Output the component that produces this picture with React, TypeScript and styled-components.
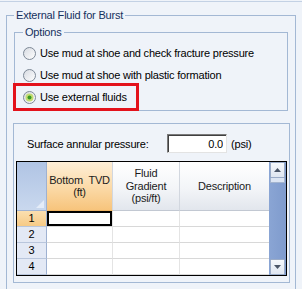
import React from "react";
import styled, { createGlobalStyle, css } from "styled-components";

const GlobalStyle = createGlobalStyle`
  body {
    margin: 0;
    background: #eff3f9;
    font-family: "Liberation Sans", Arial, sans-serif;
    font-size: 11px;
    letter-spacing: -0.2px;
    color: #000;
  }
`;

const Page = styled.div`
  width: 302px;
  height: 289px;
  overflow: hidden;
  padding-top: 1px;
  box-sizing: border-box;
`;

const TopRule = styled.div`
  height: 1px;
  background: #c3d1e4;
`;

const GroupBox = styled.fieldset`
  margin: 0;
  min-width: 0;
  border: 1px solid #a3b8d4;
`;

const OuterGroup = styled(GroupBox)`
  margin: 7px 6px 0;
  padding: 4px 7px 8px;
`;

const OptionsGroup = styled(GroupBox)`
  padding: 3px 0 2px 1px;
`;

const TableGroup = styled(GroupBox)`
  margin: 12px -2px 0 -1px;
  padding: 10px 2px 6px;
`;

const Legend = styled.legend<{ $indent: number }>`
  margin-left: ${(p) => p.$indent}px;
  padding: 0 2px;
  line-height: 13px;
  color: #15315e;
`;

const OptionRow = styled.label<{ $marked?: boolean }>`
  display: flex;
  align-items: center;
  gap: 4px;
  height: 22px;
  width: fit-content;
  padding: 0 9px 0 7px;
  white-space: nowrap;
  ${(p) =>
    p.$marked &&
    css`
      outline: 3px solid #e3121b;
    `}
`;

const PressureRow = styled.div`
  display: flex;
  align-items: center;
  height: 19px;
  padding-left: 11px;
`;

const PressureLabel = styled.span`
  width: 140px;
`;

const PressureInput = styled.input`
  box-sizing: border-box;
  width: 60px;
  height: 19px;
  margin: 0;
  padding: 0 3px;
  font: inherit;
  letter-spacing: inherit;
  text-align: right;
  background: #fff;
  border: 1px solid;
  border-color: #7a7a7a #e3e3e3 #e3e3e3 #7a7a7a;
  box-shadow: inset 1px 1px 0 #404040;
  outline: none;
`;

const Unit = styled.span`
  margin-left: 4px;
`;

const GridFrame = styled.div`
  display: flex;
  margin-top: 8px;
  border: 1px solid #000;
  background: #fff;
`;

const Sheet = styled.div`
  display: grid;
  grid-template-columns: 30px 66px 67px 89px;
  grid-template-rows: 49px repeat(4, 16px);
`;

const CornerCell = styled.div`
  box-sizing: border-box;
  display: flex;
  align-items: flex-end;
  justify-content: flex-end;
  padding: 0 2px 2px 0;
  background: linear-gradient(180deg, #b0c4e4 0%, #c9d8ee 100%);
  border-right: 1px solid #9eb1d1;
  border-bottom: 1px solid #9eb1d1;
`;

const ColHeader = styled.div<{ $active?: boolean; $last?: boolean }>`
  box-sizing: border-box;
  display: flex;
  align-items: center;
  justify-content: center;
  text-align: center;
  line-height: 12.5px;
  color: #1b1b1b;
  white-space: pre;
  background: ${(p) =>
    p.$active
      ? "linear-gradient(180deg, #feefd8 0%, #fbd9a6 55%, #f7c47c 100%)"
      : "linear-gradient(180deg, #ffffff 0%, #f3f5f8 55%, #e2e6ed 100%)"};
  border-right: ${(p) => (p.$last ? "none" : "1px solid #d2d7df")};
  border-bottom: 1px solid ${(p) => (p.$active ? "#eeb463" : "#c2c8d2")};
`;

const RowHeader = styled.div<{ $active?: boolean }>`
  box-sizing: border-box;
  display: flex;
  align-items: center;
  justify-content: center;
  line-height: 15px;
  background: ${(p) =>
    p.$active ? "linear-gradient(180deg, #fbdfb0, #f6ca86)" : "#e3e9f5"};
  border-right: 1px solid #9eb1d1;
  border-bottom: 1px solid #b9c6dc;
`;

const DataCell = styled.div<{ $selected?: boolean; $last?: boolean }>`
  box-sizing: border-box;
  background: #fff;
  border-right: ${(p) => (p.$last ? "none" : "1px solid #e4e4e4")};
  border-bottom: 1px solid #d8d8d8;
  ${(p) =>
    p.$selected &&
    css`
      box-shadow: inset 0 0 0 2px #000;
    `}
`;

const ScrollBar = styled.div`
  display: flex;
  flex-direction: column;
  width: 17px;
  background: linear-gradient(90deg, #8aa5d4 0%, #7f9bcd 100%);
`;

const ScrollButton = styled.div<{ $down?: boolean }>`
  box-sizing: border-box;
  display: flex;
  align-items: center;
  justify-content: center;
  height: 16px;
  margin: ${(p) => (p.$down ? "auto 1px 0" : "0 1px")};
  background: linear-gradient(180deg, #f5f8fc 0%, #dfe6f1 100%);
  border: 1px solid #9aabc7;
  border-radius: 1px;
`;

const Thumb = styled.div`
  box-sizing: border-box;
  height: 5px;
  margin: 0 1px;
  background: #dce5f3;
  border: 1px solid #a3b4cf;
  border-top: none;
`;

const Radio = ({ checked }: { checked?: boolean }) => (
  <svg width="13" height="13" viewBox="0 0 13 13">
    <defs>
      <linearGradient id={checked ? "rOn" : "rOff"} x1="0" y1="0" x2="1" y2="1">
        <stop offset="0" stopColor="#d6dae1" />
        <stop offset="1" stopColor="#ffffff" />
      </linearGradient>
    </defs>
    <circle
      cx="6.5"
      cy="6.5"
      r="6"
      fill={`url(#${checked ? "rOn" : "rOff"})`}
      stroke="#7d8896"
    />
    {checked && (
      <>
        <circle cx="6.5" cy="6.5" r="4" fill="#c3dc72" />
        <circle cx="6.5" cy="6.5" r="2" fill="#3b9a24" />
      </>
    )}
  </svg>
);

const Arrow = ({ down }: { down?: boolean }) => (
  <svg width="7" height="4" viewBox="0 0 7 4">
    <path d={down ? "M0 0H7L3.5 4Z" : "M0 4H7L3.5 0Z"} fill="#4b5668" />
  </svg>
);

const CornerMark = () => (
  <svg width="8" height="8" viewBox="0 0 8 8">
    <path d="M8 0V8H0Z" fill="#e4ecf8" />
  </svg>
);

const options = [
  "Use mud at shoe and check fracture pressure",
  "Use mud at shoe with plastic formation",
  "Use external fluids",
];

const columns = ["Bottom\u00a0 TVD\n(ft)", "Fluid\nGradient\n(psi/ft)", "Description"];

const App = () => {
  const rows = [1, 2, 3, 4];
  return (
    <Page>
      <GlobalStyle />
      <TopRule />
      <OuterGroup>
        <Legend $indent={0}>External Fluid for Burst</Legend>
        <OptionsGroup>
          <Legend $indent={7}>Options</Legend>
          {options.map((label, i) => (
            <OptionRow key={label} $marked={i === 2}>
              <Radio checked={i === 2} />
              {label}
            </OptionRow>
          ))}
        </OptionsGroup>
        <TableGroup>
          <PressureRow>
            <PressureLabel>Surface annular pressure:</PressureLabel>
            <PressureInput readOnly defaultValue="0.0" />
            <Unit>(psi)</Unit>
          </PressureRow>
          <GridFrame>
            <Sheet>
              <CornerCell>
                <CornerMark />
              </CornerCell>
              {columns.map((c, i) => (
                <ColHeader key={c} $active={i === 0} $last={i === 2}>
                  {c}
                </ColHeader>
              ))}
              {rows.map((r) => (
                <React.Fragment key={r}>
                  <RowHeader $active={r === 1}>{r}</RowHeader>
                  <DataCell $selected={r === 1} />
                  <DataCell />
                  <DataCell $last />
                </React.Fragment>
              ))}
            </Sheet>
            <ScrollBar>
              <ScrollButton>
                <Arrow />
              </ScrollButton>
              <Thumb />
              <ScrollButton $down>
                <Arrow down />
              </ScrollButton>
            </ScrollBar>
          </GridFrame>
        </TableGroup>
      </OuterGroup>
    </Page>
  );
};

export default App;
